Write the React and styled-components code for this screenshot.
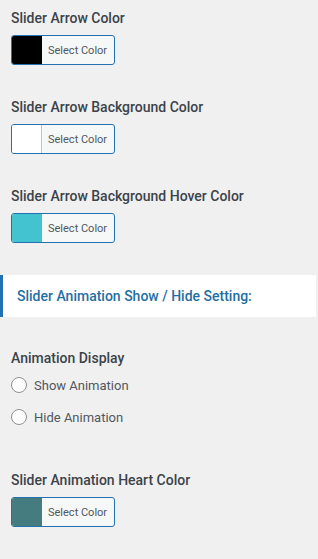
import React from "react";
import styled, { createGlobalStyle } from "styled-components";

const Global = createGlobalStyle`
  html, body { margin: 0; padding: 0; background: #f0f0f1; }
  body { font-family: Roboto, "Liberation Sans", Arial, sans-serif; }
  * { box-sizing: border-box; }
`;

const Page = styled.div`
  width: 318px;
  padding: 8px 0 20px 0;
  display: flex;
  flex-direction: column;
`;

const Field = styled.div`
  display: flex;
  flex-direction: column;
  gap: 7px;
  padding: 0 11px;
  margin-bottom: ${(p) => (p.$mb === undefined ? 32 : p.$mb)}px;
`;

const Label = styled.div`
  font-size: 14px;
  line-height: 20px;
  font-weight: 500;
  color: #3c434a;
`;

const ColorButton = styled.button`
  display: flex;
  align-items: stretch;
  width: 104px;
  height: 30px;
  padding: 0;
  border: 1px solid #2271b1;
  border-radius: 3px;
  background: #f6f7f7;
  overflow: hidden;
  cursor: pointer;
  font-family: inherit;
`;

const Swatch = styled.span`
  width: 30px;
  flex: none;
  background: ${(p) => p.$color};
  border-right: 1px solid ${(p) => (p.$color === "#ffffff" ? "#c3c4c7" : p.$color)};
`;

const ButtonText = styled.span`
  flex: 1;
  display: flex;
  align-items: center;
  padding-left: 6px;
  font-size: 11px;
  color: #50575e;
`;

const Banner = styled.div`
  width: 316px;
  height: 42px;
  background: #ffffff;
  border-left: 3px solid #2271b1;
  display: flex;
  align-items: center;
  padding-left: 14px;
  font-size: 14px;
  font-weight: 500;
  color: #1f6fa3;
  margin-bottom: 31px;
`;

const RadioGroup = styled.div`
  display: flex;
  flex-direction: column;
  gap: 12px;
`;

const RadioRow = styled.label`
  display: flex;
  align-items: center;
  gap: 7px;
  height: 20px;
  font-size: 13px;
  color: #50575e;
`;

const RadioCircle = styled.span`
  width: 16px;
  height: 16px;
  border-radius: 50%;
  border: 1px solid #8c8f94;
  background: #ffffff;
  flex: none;
`;

const ColorField = ({ label, color, mb }) => (
  <Field $mb={mb}>
    <Label>{label}</Label>
    <ColorButton type="button">
      <Swatch $color={color} />
      <ButtonText>Select Color</ButtonText>
    </ColorButton>
  </Field>
);

export default function App() {
  return (
    <Page>
      <Global />
      <ColorField label="Slider Arrow Color" color="#000000" />
      <ColorField label="Slider Arrow Background Color" color="#ffffff" />
      <ColorField label="Slider Arrow Background Hover Color" color="#43c2cf" />
      <Banner>Slider Animation Show / Hide Setting:</Banner>
      <Field $mb={43}>
        <Label>Animation Display</Label>
        <RadioGroup>
          <RadioRow>
            <RadioCircle />
            Show Animation
          </RadioRow>
          <RadioRow>
            <RadioCircle />
            Hide Animation
          </RadioRow>
        </RadioGroup>
      </Field>
      <ColorField label="Slider Animation Heart Color" color="#457c80" mb={0} />
    </Page>
  );
}
